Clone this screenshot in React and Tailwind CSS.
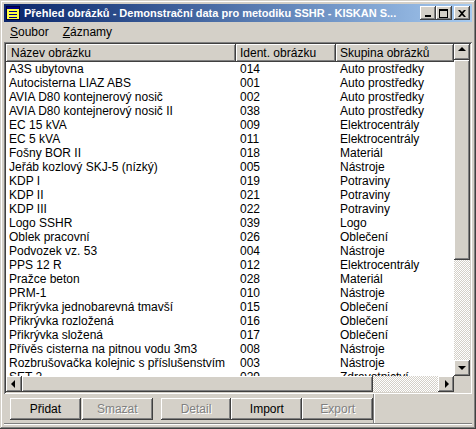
import React from 'react';

// Přehled obrázků – classic Windows 2000 style list window

const rows = [
  ['A3S ubytovna', '014', 'Auto prostředky'],
  ['Autocisterna LIAZ ABS', '001', 'Auto prostředky'],
  ['AVIA D80 kontejnerový nosič', '002', 'Auto prostředky'],
  ['AVIA D80 kontejnerový nosič II', '038', 'Auto prostředky'],
  ['EC 15 kVA', '009', 'Elektrocentrály'],
  ['EC 5 kVA', '011', 'Elektrocentrály'],
  ['Fošny BOR II', '018', 'Materiál'],
  ['Jeřáb kozlový SKJ-5 (nízký)', '005', 'Nástroje'],
  ['KDP I', '019', 'Potraviny'],
  ['KDP II', '021', 'Potraviny'],
  ['KDP III', '022', 'Potraviny'],
  ['Logo SSHR', '039', 'Logo'],
  ['Oblek pracovní', '026', 'Oblečení'],
  ['Podvozek vz. 53', '004', 'Nástroje'],
  ['PPS 12 R', '012', 'Elektrocentrály'],
  ['Pražce beton', '028', 'Materiál'],
  ['PRM-1', '010', 'Nástroje'],
  ['Přikrývka jednobarevná tmavší', '015', 'Oblečení'],
  ['Přikrývka rozložená', '016', 'Oblečení'],
  ['Přikrývka složená', '017', 'Oblečení'],
  ['Přívěs cisterna na pitnou vodu 3m3', '008', 'Nástroje'],
  ['Rozbrušovačka kolejnic s příslušenstvím', '003', 'Nástroje'],
  ['SET 2', '029', 'Zdravotnictví'],
];

const raised =
  'bg-[#d4d0c8] shadow-[inset_-1px_-1px_#404040,inset_1px_1px_#ffffff,inset_-2px_-2px_#808080,inset_2px_2px_#d4d0c8]';
const raisedThin = 'bg-[#d4d0c8] shadow-[inset_-1px_-1px_#404040,inset_1px_1px_#ffffff,inset_-2px_-2px_#808080]';
const track = 'bg-[repeating-conic-gradient(#d4d0c8_0_25%,#ffffff_0_50%)] bg-size-[2px_2px]';

const Arrow = ({ dir }) => {
  const pts = {
    up: '4,7 8,3 12,7',
    down: '4,6 8,10 12,6',
    left: '9,4 5,8 9,12',
    right: '7,4 11,8 7,12',
  }[dir];
  return (
    <div className={`w-[16px] h-[16px] flex items-center justify-center ${raised}`}>
      <svg width="16" height="16" viewBox="0 0 16 16">
        <polygon points={pts} fill="#000" />
      </svg>
    </div>
  );
};

const CaptionButton = ({ children, className = '' }) => (
  <div className={`w-[16px] h-[14px] flex items-center justify-center ${raisedThin} ${className}`}>{children}</div>
);

const Button = ({ label, disabled }) => (
  <div
    className={`w-[71px] h-[22px] flex items-center justify-center shadow-[inset_-1px_-1px_#404040,inset_1px_1px_#ffffff,inset_-2px_-2px_#808080] ${
      disabled ? 'text-[#808080] [text-shadow:1px_1px_0_#ffffff]' : 'text-black'
    }`}
  >
    {label}
  </div>
);

export default function App() {
  return (
    <div className="w-[476px] h-[429px] bg-[#d4d0c8] font-['Liberation_Sans',Arial,sans-serif] text-[11px] text-black shadow-[inset_-1px_-1px_#404040,inset_1px_1px_#d4d0c8,inset_-2px_-2px_#808080,inset_2px_2px_#ffffff] p-[4px] flex flex-col overflow-hidden select-none">
      {/* Title bar */}
      <div className="h-[18px] flex items-center bg-linear-to-r from-[#0a246a] to-[#a6caf0] pl-[1px] pr-[2px]">
        <svg width="16" height="16" viewBox="0 0 16 16" className="shrink-0">
          <rect x="1.5" y="1.5" width="13" height="13" fill="#ffff40" stroke="#000040" />
          <rect x="2" y="2" width="12" height="2" fill="#000080" />
          <rect x="4" y="6" width="8" height="1" fill="#000080" />
          <rect x="4" y="9" width="8" height="1" fill="#000080" />
          <rect x="4" y="12" width="8" height="1" fill="#000080" />
        </svg>
        <div className="ml-[3px] flex-1 text-white font-bold text-[11px] whitespace-nowrap overflow-hidden">
          Přehled obrázků - Demonstrační data pro metodiku SSHR - KISKAN S...
        </div>
        <div className="flex items-center">
          <CaptionButton>
            <svg width="8" height="8" viewBox="0 0 8 8">
              <rect x="1" y="6" width="6" height="2" fill="#000" />
            </svg>
          </CaptionButton>
          <CaptionButton>
            <svg width="10" height="9" viewBox="0 0 10 9">
              <rect x="0.5" y="0.5" width="8" height="8" fill="none" stroke="#000" />
              <rect x="0" y="0" width="9" height="2" fill="#000" />
            </svg>
          </CaptionButton>
          <CaptionButton className="ml-[2px]">
            <svg width="8" height="7" viewBox="0 0 8 7">
              <path d="M0 0h2l2 2 2-2h2L5 3.5 8 7H6L4 5 2 7H0l3-3.5z" fill="#000" />
            </svg>
          </CaptionButton>
        </div>
      </div>

      {/* Menu bar */}
      <div className="h-[20px] flex items-center gap-[14px] pl-[6px] text-[12px]">
        <span>
          <span className="underline">S</span>oubor
        </span>
        <span>
          <span className="underline">Z</span>áznamy
        </span>
      </div>

      {/* List view */}
      <div className="h-[352px] p-[2px] bg-white shadow-[inset_1px_1px_#808080,inset_-1px_-1px_#ffffff,inset_2px_2px_#404040,inset_-2px_-2px_#d4d0c8]">
        <div className="h-full grid grid-cols-[1fr_16px] grid-rows-[1fr_16px] text-[12px]">
          <div className="overflow-hidden bg-white">
            <div className="flex h-[18px]">
              <div className={`w-[230px] pl-[5px] flex items-center ${raisedThin}`}>Název obrázku</div>
              <div className={`w-[100px] pl-[4px] flex items-center ${raisedThin}`}>Ident. obrázku</div>
              <div className={`flex-1 pl-[4px] flex items-center ${raisedThin}`}>Skupina obrázků</div>
            </div>
            {rows.map(([name, id, group]) => (
              <div key={id} className="flex h-[14px] items-center leading-[14px] whitespace-nowrap">
                <div className="w-[230px] pl-[3px]">{name}</div>
                <div className="w-[100px] pl-[4px]">{id}</div>
                <div className="flex-1 pl-[4px]">{group}</div>
              </div>
            ))}
          </div>

          {/* Vertical scroll bar */}
          <div className={`flex flex-col ${track}`}>
            <Arrow dir="up" />
            <div className={`h-[200px] ${raised}`} />
            <div className="flex-1" />
            <Arrow dir="down" />
          </div>

          {/* Horizontal scroll bar */}
          <div className={`flex ${track}`}>
            <Arrow dir="left" />
            <div className={`w-[351px] ${raised}`} />
            <div className="flex-1" />
            <Arrow dir="right" />
          </div>
          <div className="bg-[#d4d0c8]" />
        </div>
      </div>

      {/* Button panel */}
      <div className="flex-1 flex flex-col">
        <div className="flex-1 flex">
          <div className="w-[370px] flex items-center pl-[6px] border-r border-r-[#808080] shadow-[1px_0_#ffffff] text-[12px]">
            <Button label="Přidat" />
            <div className="w-[1px]" />
            <Button label="Smazat" disabled />
            <div className="w-[8px]" />
            <Button label="Detail" disabled />
            <Button label="Import" />
            <Button label="Export" disabled />
          </div>
          <div className="flex-1" />
        </div>
        <div className="h-[2px] border-t border-t-[#808080] border-b border-b-[#ffffff]" />
      </div>
    </div>
  );
}
